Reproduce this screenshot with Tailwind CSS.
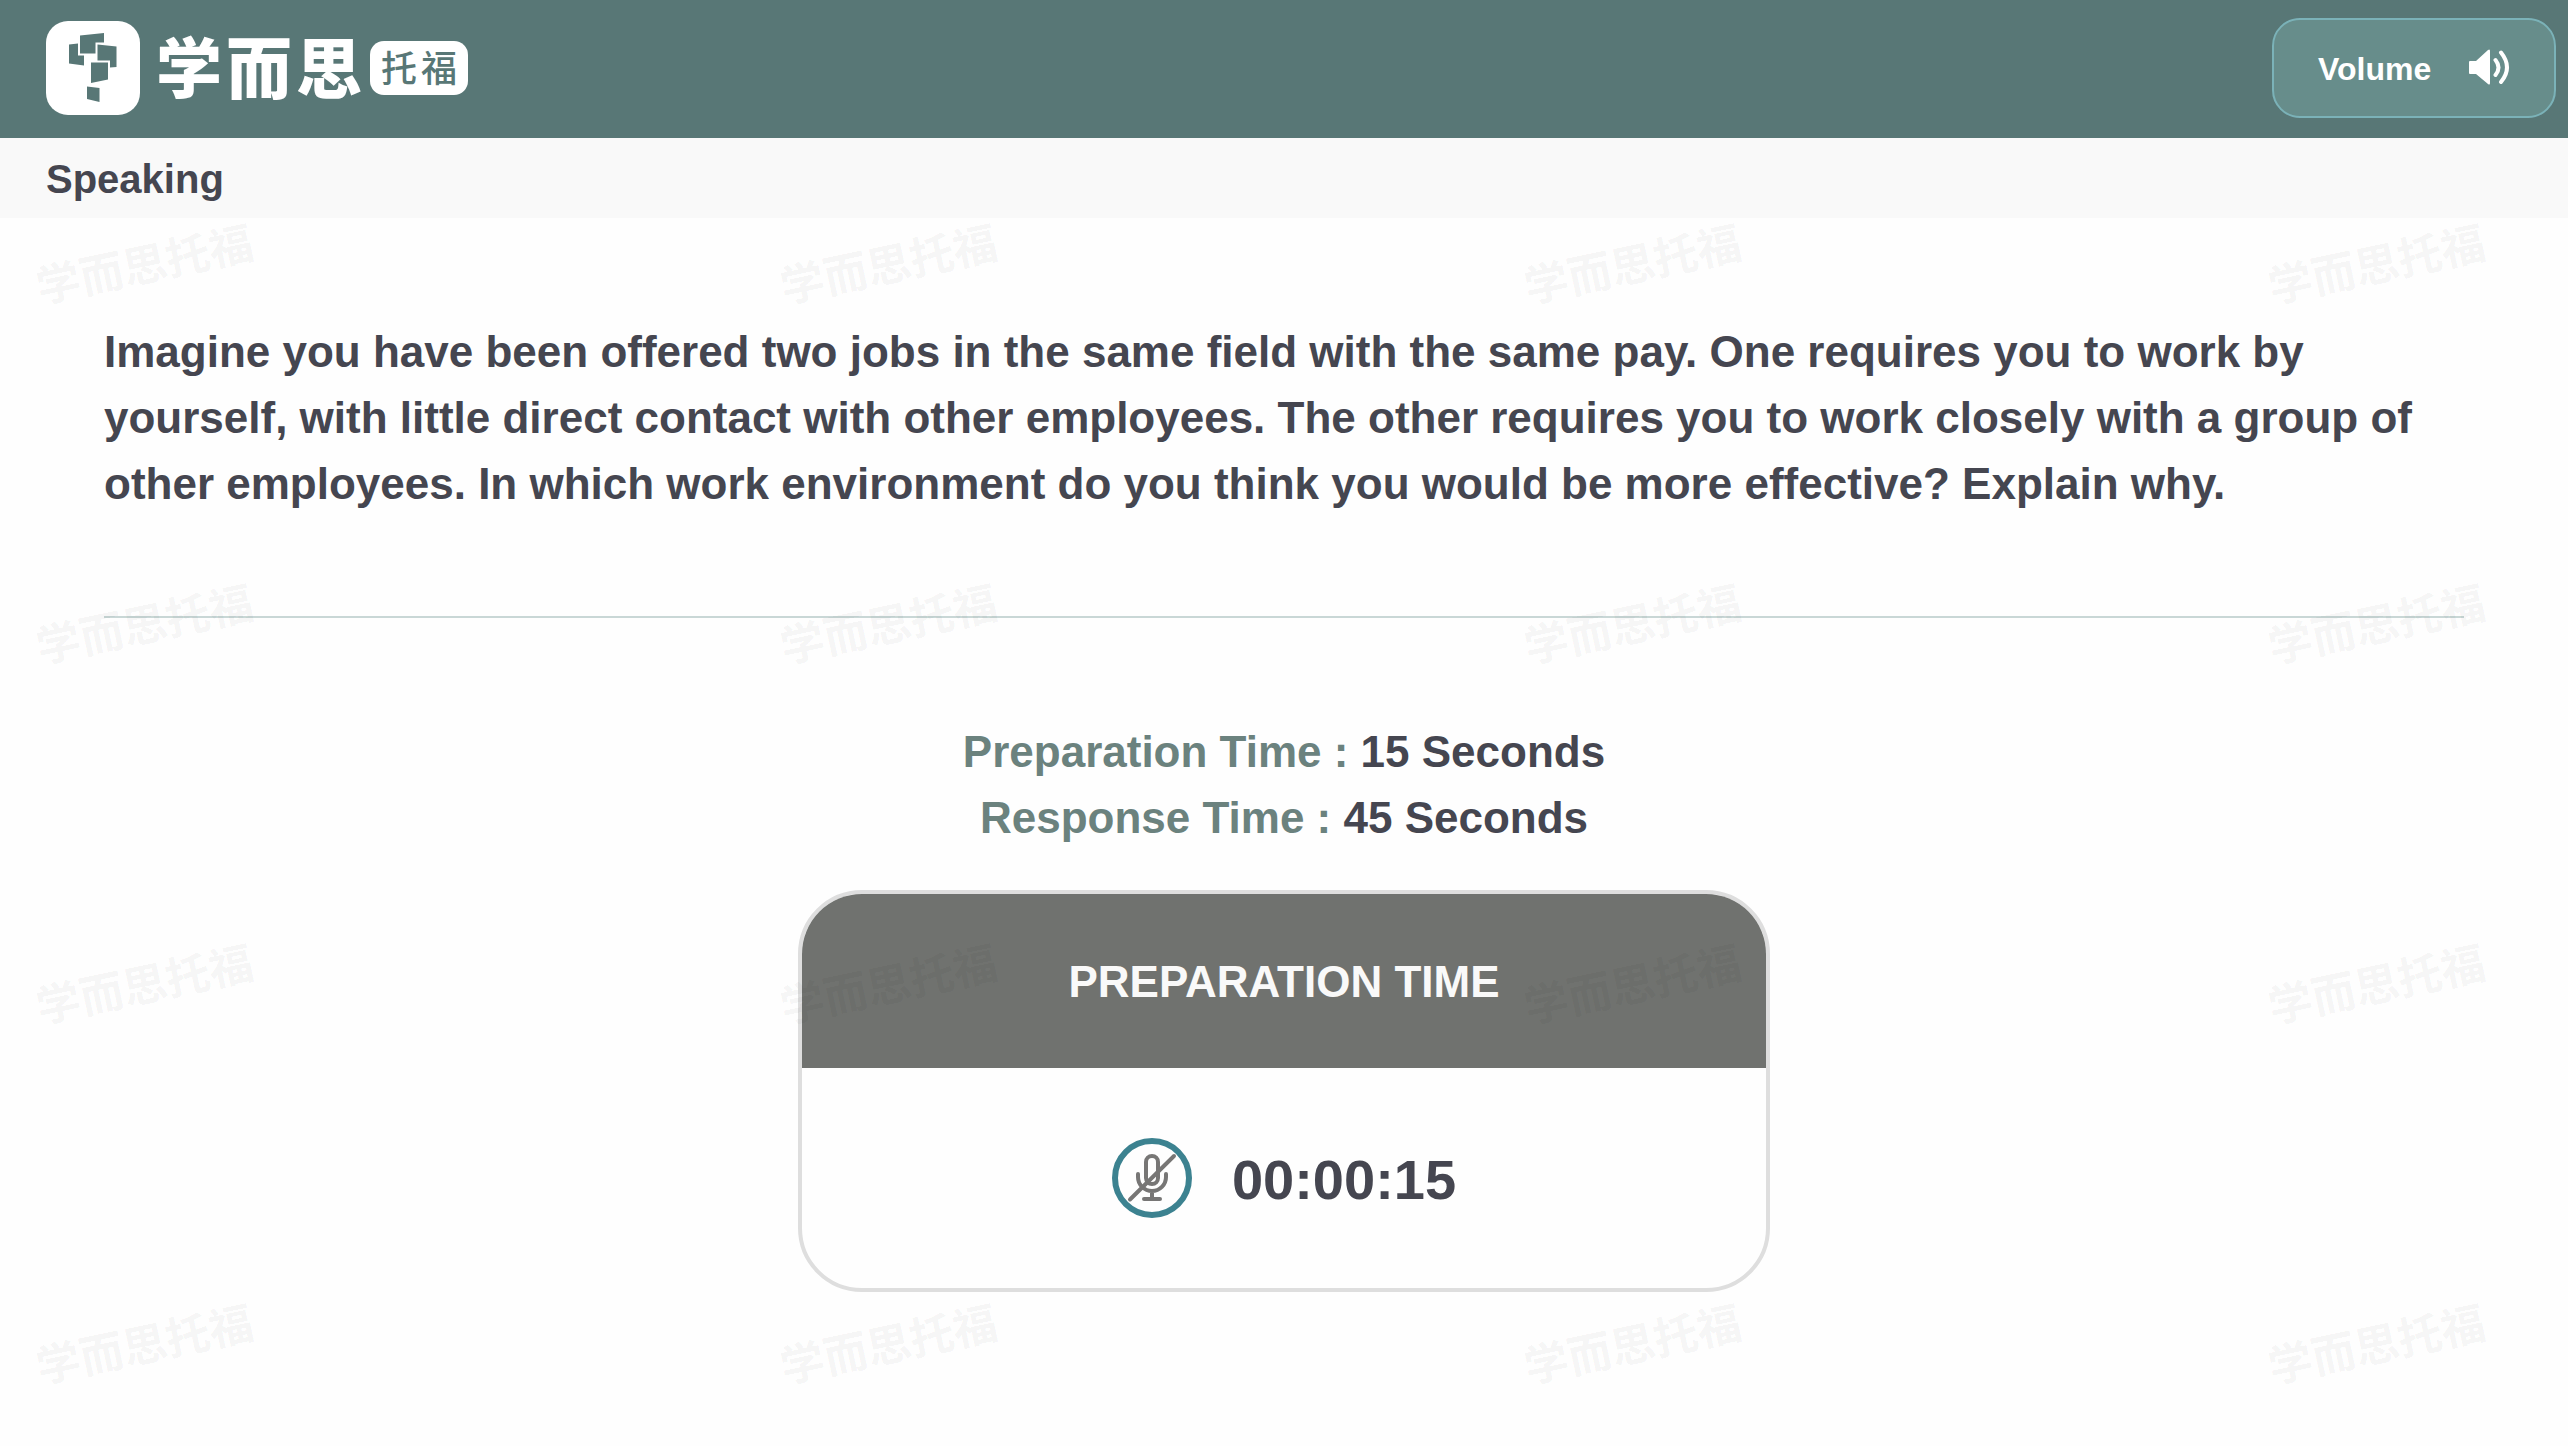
<!DOCTYPE html>
<html lang="en">
<head>
<meta charset="utf-8">
<meta name="viewport" content="width=device-width, initial-scale=1">
<title>Speaking</title>
<script src="https://cdn.jsdelivr.net/npm/@tailwindcss/browser@4"></script>
</head>
<body class="relative min-h-screen overflow-x-hidden bg-[#fefefe] font-['Liberation_Sans','Noto_Sans_CJK_SC',sans-serif] font-bold text-[#454650]">

<header class="flex h-[138px] items-center justify-between bg-[#587776] pr-3 pb-0.5 pl-[46px]">
  <a href="#" class="flex items-center font-['Noto_Sans_CJK_SC',sans-serif]">
    <svg class="h-[94px] w-[94px]" viewBox="0 0 94 94" aria-hidden="true">
      <rect width="94" height="94" rx="22" fill="#fff"/>
      <g fill="#587776">
        <path d="M34 14.500L58 12V21.500H49.500V32.500H34Z"/>
        <path d="M23 23.500L32 22.500V34.500H38V44.500L23 42.500Z"/>
        <path d="M51.500 23.500L70.500 25.500V46L64 46.500V39.500H51.500Z"/>
        <path d="M45 41.500H62V58.500L45 62Z"/>
        <path d="M41 65.500L53.500 67V81L41 78Z"/>
      </g>
    </svg>
    <span class="ml-4 flex gap-1 pb-2 text-[66px] leading-[84px] font-black text-white"><span>学</span><span>而</span><span>思</span></span>
    <span class="ml-2 flex h-[54px] w-[98px] items-center justify-center gap-1 rounded-[14px] bg-white pb-1 text-4xl leading-[50px] font-medium text-[#587776]"><span>托</span><span>福</span></span>
  </a>
  <button class="flex h-[100px] w-[284px] items-center justify-between rounded-[28px] border-2 border-[#7bb2b8] bg-[#678d8b] px-[44px] text-[32px] text-white">
    <span class="pt-0.5">Volume</span>
    <svg class="h-10 w-[42px]" viewBox="0 0 42 40" fill="none" stroke="#fff" stroke-width="4" stroke-linecap="round" aria-hidden="true">
      <path d="M2 13H8L20 2Q22 0.500 22 3V35Q22 37.500 20 36L8 26H2Q1 26 1 25V14Q1 13 2 13Z" fill="#fff" stroke="none"/>
      <path d="M27.500 12Q33.500 19.500 27.500 27M33 4.500Q45 19.500 33 34"/>
    </svg>
  </button>
</header>

<div class="flex h-20 items-center bg-[#f9f9f9] pt-0.5 pl-[46px]">
  <h1 class="text-[40px] leading-[60px]">Speaking</h1>
</div>

<main class="px-[104px] pb-16">
  <p class="pt-[101px] pb-[99px] text-[44px] leading-[66px]">Imagine you have been offered two jobs in the same field with the same pay. One requires you to work by yourself, with little direct contact with other employees. The other requires you to work closely with a group of other employees. In which work environment do you think you would be more effective? Explain why.</p>
  <hr class="border-t-2 border-[#c9d7d6]">
  <div class="pt-[101px] pb-[39px] text-center text-[44px] leading-[66px]">
    <p><span class="text-[#6b827e]">Preparation Time :</span> 15 Seconds</p>
    <p><span class="text-[#6b827e]">Response Time :</span> 45 Seconds</p>
  </div>
  <section class="mx-auto max-w-[972px] overflow-hidden rounded-[64px] border-4 border-[#dedede]">
    <h2 class="bg-[#70726f] pt-[55px] pb-[53px] text-center text-[44px] leading-[66px] text-[#f9f9f9]">PREPARATION TIME</h2>
    <div class="flex items-center justify-center gap-10 py-[70px]">
      <svg class="h-20 w-20" viewBox="0 0 80 80" fill="none" stroke="#777675" stroke-width="4" stroke-linecap="round" role="img" aria-label="Microphone off">
        <circle cx="40" cy="40" r="37" stroke="#3c8290" stroke-width="6"/>
        <rect x="34" y="18" width="12" height="28" rx="6"/>
        <path d="M26 36V39A14 14 0 0 0 54 39V36M40 53V61M32 61H48"/>
        <path d="M18 61.500L62 18"/>
      </svg>
      <time class="pt-1 text-[56px] leading-[76px]">00:00:15</time>
    </div>
  </section>
</main>

<!-- Repeating brand watermark laid over the page -->
<div id="watermark" aria-hidden="true" class="pointer-events-none absolute inset-x-0 top-60 grid grid-cols-[repeat(4,744px)] gap-y-[316px] pl-[34px] font-['Noto_Sans_CJK_SC',sans-serif] text-[44px] leading-[44px] text-black/5">
</div>
<script>
  const layer = document.getElementById("watermark");
  for (let i = 0; i < 16; i++) {
    const mark = document.createElement("span");
    mark.className = "w-[220px] -rotate-12 whitespace-nowrap";
    mark.textContent = "学而思托福";
    layer.append(mark);
  }
</script>
</body>
</html>
